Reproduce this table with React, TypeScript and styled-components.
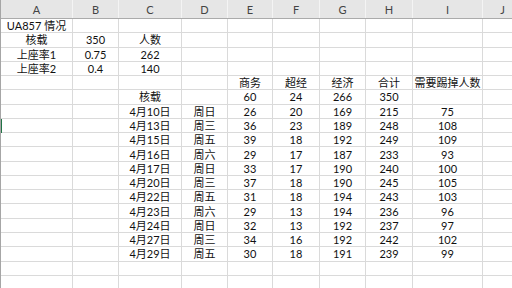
import React from "react";
import styled, { createGlobalStyle } from "styled-components";

const GlobalStyle = createGlobalStyle`
  html, body {
    margin: 0;
    padding: 0;
    background: #ffffff;
  }
  body {
    font-family: "Lato", "Noto Sans CJK SC", sans-serif;
  }
`;

const COLS = [72, 46, 63, 46, 45, 47, 46, 47, 70, 40];
const LETTERS = ["A", "B", "C", "D", "E", "F", "G", "H", "I", "J"];
const template = COLS.map((w) => `${w}px`).join(" ");

const Sheet = styled.div`
  width: 512px;
  height: 288px;
  overflow: hidden;
  position: relative;
  background: #fff;
  border-left: 1px solid #a6a6a6;
  box-sizing: border-box;
`;

const HeaderRow = styled.div`
  display: grid;
  grid-template-columns: ${template};
  height: 19px;
  background: #e6e6e6;
  border-bottom: 1px solid #ababab;
  box-sizing: border-box;
`;

const ColHead = styled.div`
  display: flex;
  align-items: center;
  justify-content: center;
  border-right: 1px solid #f4f4f4;
  font-family: "Lato", sans-serif;
  font-size: 11px;
  color: #444;
  padding-top: 1px;
`;

const Body = styled.div`
  display: grid;
  grid-template-columns: ${template};
  grid-auto-rows: 14.28px;
`;

const Cell = styled.div`
  display: flex;
  align-items: center;
  justify-content: center;
  box-sizing: border-box;
  border-right: 1px solid #dadada;
  border-bottom: 1px solid #dadada;
  font-family: "Lato", "Noto Sans CJK SC", sans-serif;
  font-size: 11px;
  color: #111;
  white-space: nowrap;
  line-height: 1;
`;

const RowMark = styled.div<{ $top: number }>`
  position: absolute;
  left: -1px;
  top: ${(p) => p.$top}px;
  width: 2px;
  height: 14px;
  background: #217346;
`;

type Row = (string | number | null)[];

const dates: [string, string, number, number, number, number, number][] = [
  ["4月10日", "周日", 26, 20, 169, 215, 75],
  ["4月13日", "周三", 36, 23, 189, 248, 108],
  ["4月15日", "周五", 39, 18, 192, 249, 109],
  ["4月16日", "周六", 29, 17, 187, 233, 93],
  ["4月17日", "周日", 33, 17, 190, 240, 100],
  ["4月20日", "周三", 37, 18, 190, 245, 105],
  ["4月22日", "周五", 31, 18, 194, 243, 103],
  ["4月23日", "周六", 29, 13, 194, 236, 96],
  ["4月24日", "周日", 32, 13, 192, 237, 97],
  ["4月27日", "周三", 34, 16, 192, 242, 102],
  ["4月29日", "周五", 30, 18, 191, 239, 99],
];

const empty: Row = Array(10).fill(null);

const rows: Row[] = [
  ["UA857 情况", null, null, null, null, null, null, null, null, null],
  ["核载", 350, "人数", null, null, null, null, null, null, null],
  ["上座率1", 0.75, 262, null, null, null, null, null, null, null],
  ["上座率2", 0.4, 140, null, null, null, null, null, null, null],
  [null, null, null, null, "商务", "超经", "经济", "合计", "需要踢掉人数", null],
  [null, null, "核载", null, 60, 24, 266, 350, null, null],
  ...dates.map((d) => [null, null, ...d, null] as Row),
  empty,
  empty,
];

export default function App() {
  return (
    <>
      <GlobalStyle />
      <Sheet>
        <HeaderRow>
          {LETTERS.map((l) => (
            <ColHead key={l}>{l}</ColHead>
          ))}
        </HeaderRow>
        <Body>
          {rows.map((r, i) =>
            r.map((v, j) => <Cell key={`${i}-${j}`}>{v ?? ""}</Cell>)
          )}
        </Body>
        <RowMark $top={119} />
      </Sheet>
    </>
  );
}
